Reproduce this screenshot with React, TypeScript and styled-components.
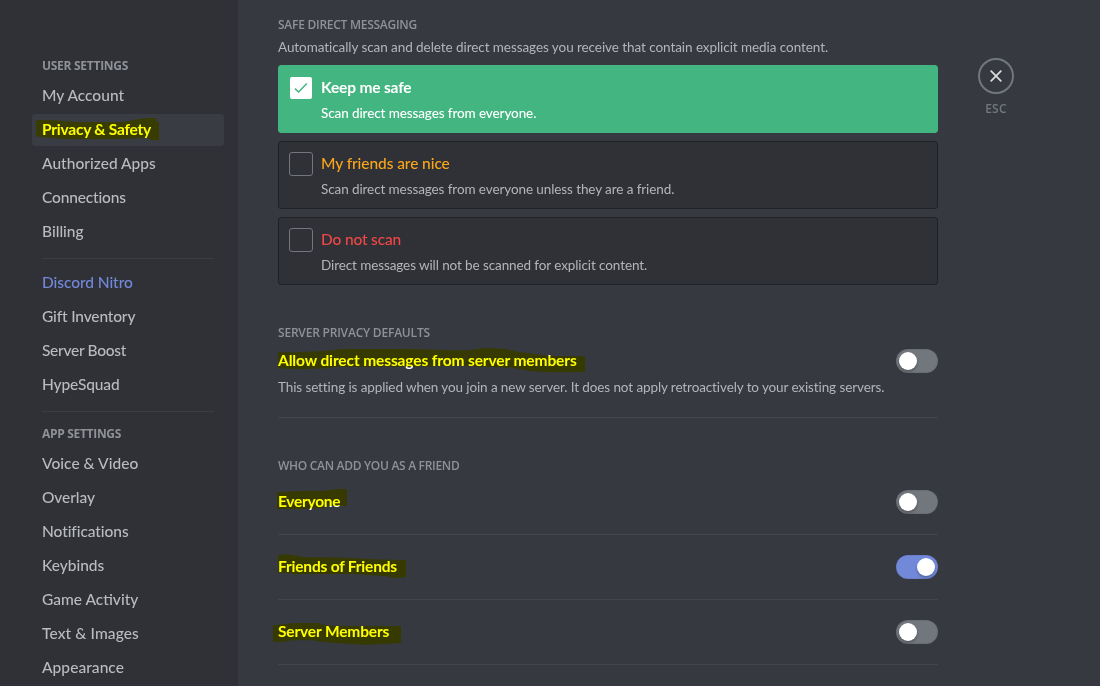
import React from "react";
import styled, { createGlobalStyle } from "styled-components";

const GlobalStyle = createGlobalStyle`
  * { box-sizing: border-box; }
  body {
    margin: 0;
    background: #36393f;
    font-family: Lato, "Open Sans", sans-serif;
    overflow: hidden;
  }
  h2, h3, p { margin: 0; }
`;

const Page = styled.div`
  display: flex;
  height: 686px;
  overflow: hidden;
  background: #36393f;
`;

const Sidebar = styled.nav`
  flex: none;
  width: 238px;
  padding: 52px 14px 0 32px;
  background: #2f3136;
`;

const SidebarHeading = styled.h2<{ $track: number }>`
  padding: 6px 10px;
  color: #8e9297;
  font-family: "Open Sans", sans-serif;
  font-size: 12px;
  font-weight: 700;
  line-height: 16px;
  letter-spacing: ${(p) => p.$track}px;
  white-space: nowrap;
`;

const NavItem = styled.div<{ $track: number; $selected?: boolean; $accent?: boolean }>`
  height: 32px;
  margin-bottom: 2px;
  padding: 5px 10px;
  border-radius: 3px;
  background: ${(p) => (p.$selected ? "#393c43" : "transparent")};
  color: ${(p) => (p.$selected ? "#fff" : p.$accent ? "#7289da" : "#b9bbbe")};
  font-size: 15.5px;
  font-weight: ${(p) => (p.$selected ? 700 : 500)};
  line-height: 20px;
  letter-spacing: ${(p) => p.$track}px;
  white-space: nowrap;
`;

const NavDivider = styled.div`
  height: 1px;
  margin: 10px 10px 8px;
  background: #3b3d43;
`;

const Marked = styled.span`
  position: relative;
  display: inline-block;
`;

const MarkerStroke = styled.svg`
  position: absolute;
  top: 0;
  left: 0;
  overflow: visible;
  mix-blend-mode: multiply;
  pointer-events: none;
`;

const Content = styled.main`
  flex: none;
  width: 660px;
  margin-left: 40px;
  padding-top: 17px;
`;

const SectionHeading = styled.h2<{ $track: number }>`
  color: #8e9297;
  font-family: "Open Sans", sans-serif;
  font-size: 12px;
  font-weight: 600;
  line-height: 16px;
  letter-spacing: ${(p) => p.$track}px;
  white-space: nowrap;
`;

const Note = styled.p<{ $track: number; $strong?: boolean }>`
  color: ${(p) => (p.$strong ? "#fff" : "#b3b5b9")};
  font-size: 13.5px;
  font-weight: ${(p) => (p.$strong ? 500 : 400)};
  line-height: 20px;
  letter-spacing: ${(p) => p.$track}px;
  white-space: nowrap;
`;

const Intro = styled.div`
  margin-top: 4px;
`;

const Options = styled.div`
  display: grid;
  gap: 8px;
  margin: 8px 0 40px;
`;

const OptionCard = styled.div<{ $checked?: boolean }>`
  display: grid;
  grid-template-columns: 24px 1fr;
  column-gap: 8px;
  height: 68px;
  padding: 10px;
  border: 1px solid ${(p) => (p.$checked ? "#43b581" : "#202225")};
  border-radius: 3px;
  background: ${(p) => (p.$checked ? "#43b581" : "#2f3136")};
`;

const CheckBox = styled.span<{ $checked?: boolean }>`
  display: flex;
  align-items: center;
  justify-content: center;
  width: ${(p) => (p.$checked ? 22 : 24)}px;
  height: ${(p) => (p.$checked ? 22 : 24)}px;
  margin: ${(p) => (p.$checked ? 1 : 0)}px;
  border: ${(p) => (p.$checked ? "none" : "1px solid #72767d")};
  border-radius: ${(p) => (p.$checked ? 2 : 3)}px;
  background: ${(p) => (p.$checked ? "#fff" : "transparent")};
`;

const OptionTitle = styled.h3<{ $color: string; $track: number; $bold?: boolean }>`
  margin-bottom: 5px;
  color: ${(p) => p.$color};
  font-size: 15.5px;
  font-weight: ${(p) => (p.$bold ? 700 : 500)};
  line-height: 22px;
  letter-spacing: ${(p) => p.$track}px;
  white-space: nowrap;
`;

const SettingRow = styled.div<{ $top: number; $bottom: number }>`
  padding: ${(p) => p.$top}px 0 ${(p) => p.$bottom}px;
  border-bottom: 1px solid #42454a;
`;

const SettingHead = styled.div`
  display: flex;
  justify-content: space-between;
  height: 24px;
`;

const SettingTitle = styled.h3<{ $track: number }>`
  color: #fff;
  font-size: 15.5px;
  font-weight: 700;
  line-height: 22px;
  letter-spacing: ${(p) => p.$track}px;
  white-space: nowrap;
`;

const Toggle = styled.span<{ $on?: boolean }>`
  display: flex;
  justify-content: ${(p) => (p.$on ? "flex-end" : "flex-start")};
  width: 42px;
  height: 24px;
  padding: 3px;
  border-radius: 12px;
  background: ${(p) => (p.$on ? "#7289da" : "#72767d")};
  box-shadow: inset 0 0 1px 0.5px rgba(0, 0, 0, 0.12);
`;

const Knob = styled.span`
  width: 18px;
  height: 18px;
  border-radius: 50%;
  background: #fff;
  box-shadow: 0 2px 3px rgba(0, 0, 0, 0.25);
`;

const Gap = styled.div<{ $h: number }>`
  height: ${(p) => p.$h}px;
`;

const CloseColumn = styled.aside`
  display: flex;
  flex-direction: column;
  align-items: center;
  width: 36px;
  margin: 58px 0 0 40px;
`;

const CloseCircle = styled.div`
  display: flex;
  align-items: center;
  justify-content: center;
  width: 36px;
  height: 36px;
  border: 2px solid #72767d;
  border-radius: 50%;
`;

const CloseLabel = styled.div`
  margin-top: 7px;
  color: #72767d;
  font-family: "Open Sans", sans-serif;
  font-size: 12px;
  font-weight: 600;
  line-height: 16px;
  letter-spacing: 0.25px;
`;

/* Marker outlines share one canvas; each is shifted to the corner of its label. */
const strokes = {
  privacy: {
    origin: "42 119 1 1",
    points:
      "36,120 50,120 77,122 123,122 133,120 147,118 156,118 156,121.5 159,122 159,140 151,140 147,138 117,139 83,139.3 63,139 36,136.5",
  },
  allow: {
    origin: "278 349 1 1",
    points:
      "278,352.3 295,352.3 325,351 342,349 408,349 452,350.3 472,350 485,348 505,349 518,351.7 542,355 553,356 585,356.3 585,372 552,372.3 532,371.3 512,367.7 465,366 382,366.7 338,366.7 325,368.3 298,369.3 278,368.3",
  },
  everyone: {
    origin: "278 490 1 1",
    points:
      "277,492.3 298,491 325,490.7 337,489 347,489.3 347,506 330,506 322,508 302,509 277,509.3",
  },
  friends: {
    origin: "278 555 1 1",
    points:
      "278,555 288,554.3 302,557 345,557.7 375,559.3 406,560 406,577.3 395,578 387,576.3 355,574 318,574 295,574.3 288,573 278,572.7",
  },
  members: {
    origin: "278 620 1 1",
    points:
      "273,625.3 295,623 318,623 328,625.7 401,626 401,643 388,643.7 365,644.7 325,642.3 312,640.3 292,640.3 285,641.7 273,641.7",
  },
};

function Marker({ name, children }: { name: keyof typeof strokes; children: React.ReactNode }) {
  const { origin, points } = strokes[name];
  return (
    <Marked>
      {children}
      <MarkerStroke width="1" height="1" viewBox={origin}>
        <polygon points={points} fill="#ffff00" />
      </MarkerStroke>
    </Marked>
  );
}

type Item = { label: string; track: number; accent?: boolean; selected?: boolean };

const userItems: Item[] = [
  { label: "My Account", track: 0.02 },
  { label: "Privacy & Safety", track: -0.23, selected: true },
  { label: "Authorized Apps", track: 0.02 },
  { label: "Connections", track: -0.16 },
  { label: "Billing", track: 0 },
];

const nitroItems: Item[] = [
  { label: "Discord Nitro", track: -0.07, accent: true },
  { label: "Gift Inventory", track: -0.16 },
  { label: "Server Boost", track: -0.28 },
  { label: "HypeSquad", track: -0.13 },
];

const appItems: Item[] = [
  { label: "Voice & Video", track: 0.03 },
  { label: "Overlay", track: -0.08 },
  { label: "Notifications", track: -0.08 },
  { label: "Keybinds", track: -0.03 },
  { label: "Game Activity", track: 0 },
  { label: "Text & Images", track: 0.11 },
  { label: "Appearance", track: 0.06 },
];

const NavGroup = ({ items }: { items: Item[] }) => (
  <>
    {items.map((i) => (
      <NavItem key={i.label} $track={i.track} $selected={i.selected} $accent={i.accent}>
        {i.selected ? <Marker name="privacy">{i.label}</Marker> : i.label}
      </NavItem>
    ))}
  </>
);

export default function App() {
  return (
    <>
      <GlobalStyle />
      <Page>
        <Sidebar>
          <SidebarHeading $track={-0.28}>USER SETTINGS</SidebarHeading>
          <NavGroup items={userItems} />
          <NavDivider />
          <NavGroup items={nitroItems} />
          <NavDivider />
          <SidebarHeading $track={-0.31}>APP SETTINGS</SidebarHeading>
          <NavGroup items={appItems} />
        </Sidebar>

        <Content>
          <SectionHeading $track={-0.26}>SAFE DIRECT MESSAGING</SectionHeading>
          <Intro>
            <Note $track={-0.067}>
              Automatically scan and delete direct messages you receive that contain explicit media content.
            </Note>
          </Intro>
          <Options>
            <OptionCard $checked>
              <CheckBox $checked>
                <svg width="14" height="12" viewBox="0 0 14 12" fill="none">
                  <path d="M1 6.6L4.6 10L12.8 1.6" stroke="#43b581" strokeWidth="1.5" />
                </svg>
              </CheckBox>
              <div>
                <OptionTitle $color="#fff" $track={-0.16} $bold>Keep me safe</OptionTitle>
                <Note $track={-0.11} $strong>Scan direct messages from everyone.</Note>
              </div>
            </OptionCard>
            <OptionCard>
              <CheckBox />
              <div>
                <OptionTitle $color="#faa61a" $track={-0.076}>My friends are nice</OptionTitle>
                <Note $track={-0.095}>Scan direct messages from everyone unless they are a friend.</Note>
              </div>
            </OptionCard>
            <OptionCard>
              <CheckBox />
              <div>
                <OptionTitle $color="#f04747" $track={-0.17}>Do not scan</OptionTitle>
                <Note $track={-0.1}>Direct messages will not be scanned for explicit content.</Note>
              </div>
            </OptionCard>
          </Options>

          <SectionHeading $track={-0.2}>SERVER PRIVACY DEFAULTS</SectionHeading>
          <SettingRow $top={8} $bottom={20}>
            <SettingHead>
              <SettingTitle $track={-0.115}>
                <Marker name="allow">Allow direct messages from server members</Marker>
              </SettingTitle>
              <Toggle><Knob /></Toggle>
            </SettingHead>
            <Gap $h={4} />
            <Note $track={-0.106}>
              This setting is applied when you join a new server. It does not apply retroactively to your existing servers.
            </Note>
          </SettingRow>

          <Gap $h={40} />
          <SectionHeading $track={-0.3}>WHO CAN ADD YOU AS A FRIEND</SectionHeading>
          <SettingRow $top={16} $bottom={20}>
            <SettingHead>
              <SettingTitle $track={-0.28}><Marker name="everyone">Everyone</Marker></SettingTitle>
              <Toggle><Knob /></Toggle>
            </SettingHead>
          </SettingRow>
          <SettingRow $top={20} $bottom={20}>
            <SettingHead>
              <SettingTitle $track={-0.2}><Marker name="friends">Friends of Friends</Marker></SettingTitle>
              <Toggle $on><Knob /></Toggle>
            </SettingHead>
          </SettingRow>
          <SettingRow $top={20} $bottom={20}>
            <SettingHead>
              <SettingTitle $track={-0.15}><Marker name="members">Server Members</Marker></SettingTitle>
              <Toggle><Knob /></Toggle>
            </SettingHead>
          </SettingRow>
        </Content>

        <CloseColumn>
          <CloseCircle>
            <svg width="12" height="12" viewBox="0 0 12 12">
              <path d="M0.7 0.7L11.3 11.3M11.3 0.7L0.7 11.3" stroke="#dcddde" strokeWidth="1.7" />
            </svg>
          </CloseCircle>
          <CloseLabel>ESC</CloseLabel>
        </CloseColumn>
      </Page>
    </>
  );
}
